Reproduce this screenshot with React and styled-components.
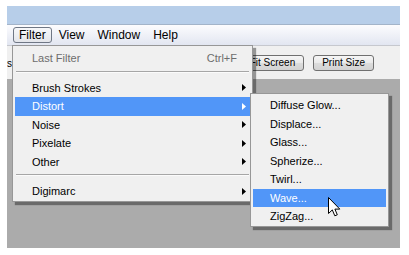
import React from "react";
import styled, { createGlobalStyle } from "styled-components";

const GlobalStyle = createGlobalStyle`
  html, body {
    margin: 0;
    padding: 0;
    background: #ffffff;
  }
  body {
    font-family: "Liberation Sans", Arial, sans-serif;
  }
`;

const Window = styled.div`
  position: relative;
  margin: 6px 0 0 7px;
  width: 393px;
  height: 242px;
  display: flex;
  flex-direction: column;
  overflow: visible;
`;

const TitleBar = styled.div`
  height: 18px;
  background: #b7cee9;
  border-bottom: 1px solid #a3b4c9;
`;

const MenuBar = styled.div`
  height: 20px;
  box-sizing: border-box;
  padding: 2px 0 0 6px;
  display: flex;
  align-items: flex-start;
  gap: 1px;
  background: linear-gradient(#fcfcfe, #e2e6f1);
`;

const MenuTitle = styled.div`
  height: 16px;
  box-sizing: border-box;
  padding: 0 5px;
  display: flex;
  align-items: center;
  font-size: 12px;
  color: #000;
  border: 1px solid ${(p) => (p.$open ? "#6f7785" : "transparent")};
  border-radius: 3px;
  background: ${(p) =>
    p.$open ? "linear-gradient(#f7f8fa, #e3e5ea)" : "transparent"};
`;

const Toolbar = styled.div`
  height: 34px;
  box-sizing: border-box;
  border-top: 1px solid #c6c8ce;
  background: #f0f0f0;
  display: flex;
  align-items: center;
  padding-right: 26px;
`;

// what peeks out left of the open menu
const ClipLabel = styled.div`
  width: 5px;
  overflow: hidden;
  display: flex;
  justify-content: flex-end;
  white-space: nowrap;
  font-size: 10px;
  color: #000;
  margin-top: 2px;
`;

const Spacer = styled.div`
  flex: 1;
`;

const ButtonGroup = styled.div`
  display: flex;
  gap: 9px;
`;

const ToolButton = styled.div`
  height: 16px;
  box-sizing: border-box;
  padding: 0 8px;
  display: flex;
  align-items: center;
  font-size: 10px;
  color: #000;
  white-space: nowrap;
  border: 1px solid #707070;
  border-radius: 3px;
  background: linear-gradient(#f6f6f6 0%, #e9e9e9 50%, #dcdcdc 51%, #d2d2d2 100%);
`;

const Canvas = styled.div`
  flex: 1;
  background: #ababab;
`;

const Menu = styled.div`
  position: absolute;
  left: ${(p) => p.$left}px;
  top: ${(p) => p.$top}px;
  width: ${(p) => p.$width}px;
  box-sizing: border-box;
  padding: ${(p) => p.$padTop}px 2px 0;
  background: #f0f0f0;
  border: 1px solid #979797;
  box-shadow: 3px 3px 1px rgba(0, 0, 0, 0.38);
  z-index: ${(p) => p.$z};
`;

const Row = styled.div`
  height: 18.5px;
  display: flex;
  align-items: center;
  padding: 0 4px 0 17px;
  font-size: 11px;
  color: ${(p) => (p.$active ? "#ffffff" : p.$disabled ? "#6d6d6d" : "#000000")};
  background: ${(p) => (p.$active ? "#5196f8" : "transparent")};
  white-space: nowrap;
`;

const Label = styled.span`
  flex: 1;
`;

const Shortcut = styled.span`
  margin-right: 9px;
`;

const Separator = styled.div`
  height: 1px;
  margin: 3px 1px 6px;
  background: #a6a6a6;
  border-bottom: 1px solid #fbfbfb;
`;

const Arrow = ({ color }) => (
  <svg width="4" height="7" viewBox="0 0 4 7">
    <polygon points="0,0 4,3.5 0,7" fill={color} />
  </svg>
);

const Cursor = styled.svg`
  position: absolute;
  left: 321px;
  top: 191px;
  z-index: 5;
`;

const menuItems = [
  { label: "Brush Strokes", sub: true },
  { label: "Distort", sub: true, active: true },
  { label: "Noise", sub: true },
  { label: "Pixelate", sub: true },
  { label: "Other", sub: true },
];

const distortItems = [
  "Diffuse Glow...",
  "Displace...",
  "Glass...",
  "Spherize...",
  "Twirl...",
  "Wave...",
  "ZigZag...",
];

const App = () => {
  return (
    <>
      <GlobalStyle />
      <Window>
        <TitleBar />
        <MenuBar>
          <MenuTitle $open>Filter</MenuTitle>
          <MenuTitle>View</MenuTitle>
          <MenuTitle>Window</MenuTitle>
          <MenuTitle>Help</MenuTitle>
        </MenuBar>
        <Toolbar>
          <ClipLabel>All Layers</ClipLabel>
          <Spacer />
          <ButtonGroup>
            <ToolButton>Fit Screen</ToolButton>
            <ToolButton>Print Size</ToolButton>
          </ButtonGroup>
        </Toolbar>
        <Canvas />

        {/* Filter dropdown */}
        <Menu $left={5} $top={39} $width={241} $padTop={3} $z={2}>
          <Row $disabled>
            <Label>Last Filter</Label>
            <Shortcut>Ctrl+F</Shortcut>
          </Row>
          <Separator />
          {menuItems.map((item) => (
            <Row key={item.label} $active={item.active}>
              <Label>{item.label}</Label>
              <Arrow color={item.active ? "#ffffff" : "#000000"} />
            </Row>
          ))}
          <Separator />
          <Row>
            <Label>Digimarc</Label>
            <Arrow color="#000000" />
          </Row>
        </Menu>

        {/* Distort submenu */}
        <Menu $left={243} $top={87} $width={139} $padTop={2} $z={3}>
          {distortItems.map((label) => (
            <Row key={label} $active={label === "Wave..."}>
              <Label>{label}</Label>
            </Row>
          ))}
        </Menu>

        <Cursor width="13" height="21" viewBox="0 0 13 21">
          <path
            d="M0.5 0.5 L0.5 16.5 L4.3 12.9 L6.8 18.8 L9.3 17.8 L6.9 12.1 L11.8 12.1 Z"
            fill="#ffffff"
            stroke="#000000"
            strokeWidth="1"
            strokeLinejoin="miter"
          />
        </Cursor>
      </Window>
    </>
  );
};

export default App;
